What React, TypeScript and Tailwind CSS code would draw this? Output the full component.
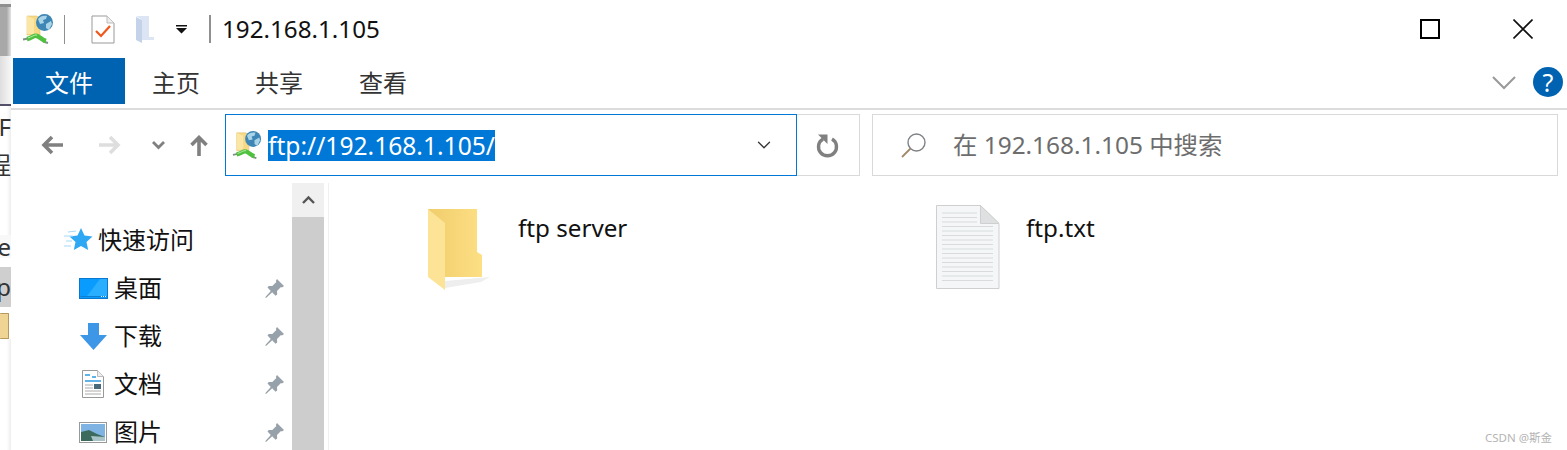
import React from "react";
import { ChevronDown } from "lucide-react";

const FONT = "font-['Noto_Sans','Noto_Sans_CJK_SC',sans-serif]";

function NetworkIcon({ size = 32 }: { size?: number }) {
  return (
    <svg width={size} height={size} viewBox="0 0 32 32" className="shrink-0">
      <path d="M5 3h10l3 3v16H5z" fill="#f7d985" stroke="#e0c26e" strokeWidth="0.6" />
      <path d="M5 3l7 3v15H5z" fill="#fbe6a6" />
      <circle cx="22.500" cy="9.500" r="8.500" fill="#3d86b5" />
      <path d="M16 6c2-3 6-4 9-3l-1 3-3 1 1 3-4 1zM24 11l5-3 1 3-3 6-3-2z" fill="#a9d3e6" />
      <path d="M1 26.500l5-1M21 28.500l5 1.500" stroke="#80908a" strokeWidth="2" />
      <path d="M5 26C10 25 12 22 15 23C18 24 20 27 24 28" fill="none" stroke="#4fc13f" strokeWidth="4.500" />
      <path d="M6 25C10 24 12 21.500 15 22" fill="none" stroke="#b6eda9" strokeWidth="1" />
    </svg>
  );
}

function PinIcon() {
  return (
    <svg width="21" height="21" viewBox="0 0 21 21" className="shrink-0">
      <path d="M13 1l7 7-2 1.500-1-.6-4 4.100.2 3.500-1.700 1.200-3.300-3.400L2 20l-.8-.8 5.600-6.300-3.300-3.300L4.700 7.900l3.600.2 4.100-4-.6-1z" fill="#96a1a9" />
    </svg>
  );
}

function NavRow({ icon, label }: { icon: React.ReactNode; label: string }) {
  return (
    <div className="flex h-[48px] items-center pl-[67px] pr-[7px]">
      <div className="flex w-[30px] shrink-0 items-center justify-center">{icon}</div>
      <span className="ml-[6px] flex-1 text-[24px] leading-none text-[#111]">{label}</span>
      <PinIcon />
    </div>
  );
}

const DOC_LINES = [8, 12.5, 17, 21.5, 26, 30.5, 35, 39.5, 44, 48.5, 53, 57.5, 62, 66.5, 71, 75.5];

export default function App() {
  return (
    <div className={`flex h-[450px] w-[1567px] overflow-hidden bg-white ${FONT}`}>
      {/* sliver of the window behind */}
      <div className="flex w-[11px] shrink-0 flex-col overflow-hidden text-[24px] leading-none text-[#333]">
        <div className="h-[4px] shrink-0 bg-[#f4f4f4]" />
        <div className="h-[3px] shrink-0 bg-[#8f8f8f]" />
        <div className="h-[49px] shrink-0 bg-[linear-gradient(90deg,#a8a8a8_60%,#e4e4e4)]" />
        <div className="h-[48px] shrink-0 bg-[linear-gradient(90deg,#dedede,#f7f7f7)]" />
        <div className="h-[2px] shrink-0 bg-[#55506a]" />
        <div className="flex h-[129px] shrink-0 flex-col items-end gap-[14px] overflow-hidden pt-[9px] bg-[linear-gradient(90deg,#fff_60%,#eee)]">
          <span className="h-[24px]">0F</span>
          <span className="h-[24px]">程</span>
        </div>
        <div className="flex h-[23px] shrink-0 items-center justify-end bg-[#f8f8f8]">e</div>
        <div className="h-[9px] shrink-0 bg-white" />
        <div className="flex h-[40px] shrink-0 items-center justify-end bg-[#cfcfcf]">p</div>
        <div className="h-[6px] shrink-0 bg-white" />
        <div className="h-[26px] w-[9px] shrink-0 rounded-[1px] border border-[#b59a5c] border-l-0 bg-[#efd493]" />
        <div className="flex-1 bg-[linear-gradient(90deg,#fff_60%,#eee)]" />
      </div>

      <div className="flex min-w-0 flex-1 flex-col">
        {/* title bar */}
        <div className="flex h-[58px] shrink-0 items-center pl-[11px] pr-[34px]">
          <NetworkIcon />
          <div className="ml-[10px] h-[29px] w-px bg-[#909090]" />
          <svg width="24" height="29" viewBox="0 0 24 29" className="ml-[26px]">
            <path d="M1 1h15l7 7v20H1z" fill="#fff" stroke="#999" />
            <path d="M16 1v7h7" fill="#eee" stroke="#bbb" />
            <path d="M5 16l5 5 9-10" fill="none" stroke="#f0571b" strokeWidth="2.200" />
          </svg>
          <svg width="20" height="28" viewBox="0 0 20 28" className="ml-[21px]">
            <path d="M0 2l6 3v23l-6-3z" fill="#c4d3e9" />
            <path d="M0 1h13v21h5v3H6V5z" fill="#dbe5f3" />
          </svg>
          <svg width="11" height="9" viewBox="0 0 11 9" className="ml-[20px]">
            <path d="M0 0h11v1.500H0zM0 3h11L5.500 8.500z" fill="#111" />
          </svg>
          <div className="ml-[22px] h-[28px] w-[2px] bg-[#909090]" />
          <span className="ml-[11px] text-[24.200px] leading-none text-[#111]">192.168.1.105</span>
          <div className="flex-1" />
          <div className="h-[20px] w-[20px] border-[2px] border-black" />
          <svg width="20" height="20" viewBox="0 0 20 20" className="ml-[73px]">
            <path d="M.5.500l19 19M19.500.500l-19 19" stroke="#111" strokeWidth="1.600" />
          </svg>
        </div>

        {/* ribbon tabs */}
        <div className="flex h-[52px] shrink-0 items-start border-b-2 border-[#dcdcdc] pl-[2px] pr-[4px] text-[24px] leading-none text-[#333]">
          <div className="flex h-[46px] w-[112px] items-center justify-center bg-[#0063b1] pt-[4px] text-white">文件</div>
          <div className="flex h-[46px] w-[102px] items-center justify-center pt-[4px]">主页</div>
          <div className="flex h-[46px] w-[104px] items-center justify-center pt-[4px]">共享</div>
          <div className="flex h-[46px] w-[104px] items-center justify-center pt-[4px]">查看</div>
          <div className="flex-1" />
          <svg width="24" height="14" viewBox="0 0 24 14" className="mt-[18px]">
            <path d="M1 1l11 11L23 1" fill="none" stroke="#999" strokeWidth="2" />
          </svg>
          <div className="ml-[17px] mt-[9px] flex h-[30px] w-[30px] items-center justify-center rounded-full bg-[#0063b1] text-[25px] text-white">?</div>
        </div>

        {/* address row */}
        <div className="flex h-[72px] shrink-0 items-center pb-[2px] pr-[9px] text-[24px]">
          <div className="flex w-[214px] shrink-0 items-center">
            <svg width="22" height="20" viewBox="0 0 22 20" className="ml-[30px]">
              <path d="M22 10H4M11 2l-8 8 8 8" fill="none" stroke="#808080" strokeWidth="3.600" />
            </svg>
            <svg width="22" height="20" viewBox="0 0 22 20" className="ml-[36px]">
              <path d="M0 10h18M11 2l8 8-8 8" fill="none" stroke="#dedede" strokeWidth="3.600" />
            </svg>
            <svg width="13" height="10" viewBox="0 0 13 10" className="ml-[31px]">
              <path d="M1 2l5.500 5.500L12 2" fill="none" stroke="#808080" strokeWidth="2.800" />
            </svg>
            <svg width="18" height="21" viewBox="0 0 18 21" className="ml-[25px]">
              <path d="M9 21V3M1.500 10L9 2.500l7.500 7.500" fill="none" stroke="#808080" strokeWidth="3.600" />
            </svg>
          </div>
          <div className="flex h-[62px] w-[572px] shrink-0 items-center border border-[#0078d7] pl-[6px] pr-[21px]">
            <NetworkIcon size={30} />
            <span className="ml-[6px] bg-[#0078d7] text-[24.600px] leading-[31px] text-white">ftp://192.168.1.105/</span>
            <div className="flex-1" />
            <ChevronDown size={22} strokeWidth={1.400} className="text-[#333]" />
          </div>
          <div className="flex h-[62px] w-[63px] shrink-0 items-center justify-center border border-l-0 border-[#d9d9d9]">
            <svg width="24" height="25" viewBox="0 0 24 25">
              <path d="M7 6a9 9 0 1 0 9 0" fill="none" stroke="#808080" strokeWidth="3.400" />
              <path d="M2 1.500h9.500V11z" fill="#808080" />
            </svg>
          </div>
          <div className="ml-[12px] flex h-[62px] flex-1 items-center border border-[#d9d9d9] pl-[28px] text-[#6d6d6d]">
            <svg width="25" height="25" viewBox="0 0 25 25" className="shrink-0">
              <circle cx="15.500" cy="9.500" r="8.500" fill="none" stroke="#7f8285" strokeWidth="1.400" />
              <path d="M9.500 15.500L1 24" stroke="#a08a6a" strokeWidth="1.800" />
            </svg>
            <span className="ml-[27px] text-[24.400px]">在 192.168.1.105 中搜索</span>
          </div>
        </div>

        {/* body */}
        <div className="flex min-h-0 flex-1 pt-[1px]">
          <div className="w-[281px] shrink-0 pt-[33px]">
            <div className="flex h-[48px] items-center pl-[52px]">
              <svg width="30" height="26" viewBox="0 0 30 26" className="shrink-0">
                <path d="M18 1l3.500 7.500 8 1-6 5.500 1.700 8-7.200-4-7.200 4 1.700-8-6-5.500 8-1z" fill="#2fa8f4" />
                <path d="M5 5l8-1M1 9h9M3 14h6M1 19h7" stroke="#a5d9f9" strokeWidth="1.200" />
              </svg>
              <span className="ml-[5px] text-[24px] leading-none text-[#111]">快速访问</span>
            </div>
            <NavRow
              label="桌面"
              icon={
                <svg width="29" height="21" viewBox="0 0 29 21">
                  <rect x="0.500" y="0.500" width="28" height="20" fill="#0a9bff" stroke="#0a78cf" />
                  <path d="M8 18L21 1h7v17z" fill="#2aaeff" />
                  <path d="M1.500 18.500h26" stroke="#0f7fd0" />
                  <path d="M22 18.500h5" stroke="#e2f3ff" strokeDasharray="1 1" />
                </svg>
              }
            />
            <NavRow
              label="下载"
              icon={
                <svg width="27" height="27" viewBox="0 0 27 27">
                  <path d="M8 0h11v12h8L13.500 27 0 12h8z" fill="#3d96e6" />
                </svg>
              }
            />
            <NavRow
              label="文档"
              icon={
                <svg width="22" height="28" viewBox="0 0 22 28">
                  <path d="M.5.500h15l6 6v21H.5z" fill="#fff" stroke="#999" />
                  <path d="M15.500.500v6h6" fill="#eee" stroke="#bbb" />
                  <path d="M3 5h5M10 7h4M3 11h16" stroke="#2d9be0" strokeWidth="1.500" />
                  <path d="M3 15h8M3 18h8M3 21h16M3 24h16" stroke="#aaa" />
                  <rect x="12" y="14" width="7" height="5" fill="#47697a" />
                </svg>
              }
            />
            <NavRow
              label="图片"
              icon={
                <svg width="28" height="21" viewBox="0 0 28 21">
                  <rect x="0.500" y="0.500" width="27" height="20" fill="#fff" stroke="#999" />
                  <rect x="2" y="2" width="24" height="17" fill="#7fb3e4" />
                  <path d="M2 10l8-2 8 4 8 3v4H2z" fill="#3c6a5c" />
                  <path d="M12 14l14 1v4H14z" fill="#a8c4c9" />
                </svg>
              }
            />
          </div>

          {/* scroll bar */}
          <div className="flex w-[32px] shrink-0 flex-col">
            <div className="flex h-[34px] shrink-0 items-center justify-center bg-[#f0f0f0]">
              <svg width="13" height="10" viewBox="0 0 13 10">
                <path d="M1 8l5.500-5.500L12 8" fill="none" stroke="#555" strokeWidth="2.400" />
              </svg>
            </div>
            <div className="flex-1 bg-[#cdcdcd]" />
          </div>
          <div className="ml-[4px] w-px shrink-0 bg-[#f0f0f0]" />

          {/* files */}
          <div className="relative flex min-w-0 flex-1 pl-[99px] pt-[26px] text-[24.200px] leading-none text-[#111]">
            <div className="flex w-[508px] shrink-0 items-start">
              <svg width="62" height="84" viewBox="0 0 62 84" className="shrink-0">
                <defs>
                  <linearGradient id="fb" x1="0" x2="1" y1="0" y2="0">
                    <stop offset="0" stopColor="#f0cd6c" />
                    <stop offset="1" stopColor="#fddf84" />
                  </linearGradient>
                </defs>
                <path d="M17 72l45-4-9 5-36 6z" fill="#eeeeee" />
                <path d="M0 0h49v43l5 3v22H0z" fill="url(#fb)" />
                <path d="M0 0l17 14v67L0 68z" fill="#fde396" />
              </svg>
              <span className="ml-[28px] mt-[7px]">ftp server</span>
            </div>
            <div className="-mt-[4px] flex items-start">
              <svg width="64" height="84" viewBox="0 0 64 84" className="shrink-0">
                <path d="M.5.500h44l18.500 18v65H.5z" fill="#f5f6f7" stroke="#cfcfcf" />
                <path d="M44.500.500v18h18.500z" fill="#dfe0e1" stroke="#cfcfcf" />
                {DOC_LINES.map((y) => (
                  <path key={y} d={`M6 ${y}H${y < 19 ? 41 : 57}`} stroke="#d8dbde" strokeWidth="1.200" />
                ))}
              </svg>
              <span className="ml-[26px] mt-[11px]">ftp.txt</span>
            </div>
            <span className="absolute bottom-[7px] right-[15px] text-[11.500px] leading-none text-[#b4b4b4]">CSDN @斯金</span>
          </div>
        </div>
      </div>
    </div>
  );
}
